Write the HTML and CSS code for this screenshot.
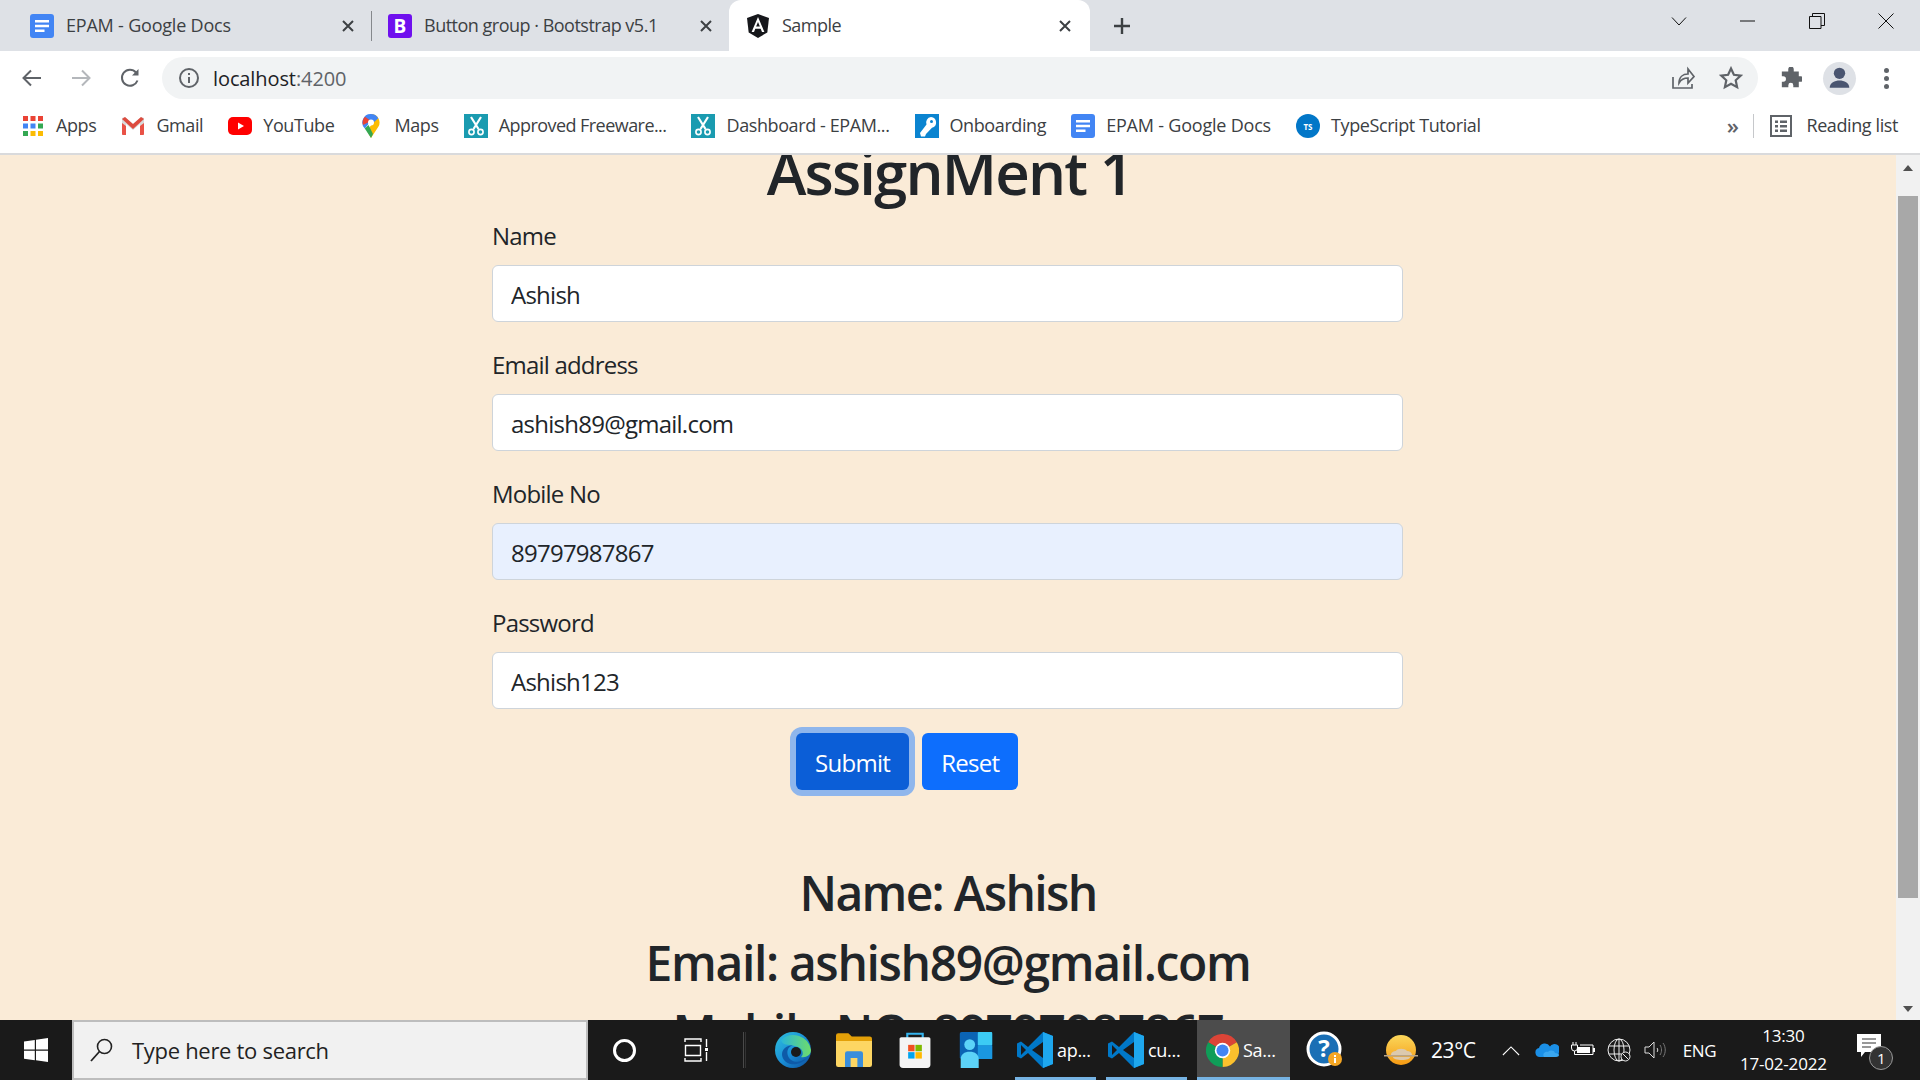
FILE: index.html
```html
<!DOCTYPE html>
<html lang="en">
<head>
<meta charset="utf-8">
<title>Sample</title>
<link rel="stylesheet" href="styles.css">
</head>
<body>
<svg class="defs" width="0" height="0">
  <defs>
    <symbol id="docs" viewBox="0 0 24 24"><rect x="0" y="0" width="24" height="24" rx="3" fill="#4285f4"/><path d="M5 6h14v2.6H5zM5 10.7h14v2.6H5zM5 15.4h9.5V18H5z" fill="#fff"/></symbol>
    <symbol id="ng" viewBox="0 0 24 24"><path d="M12 0 1 3.9l1.7 14.5L12 24l9.3-5.6L23 3.9z" fill="#16171b"/><path d="M12 3 5.6 18h2.4l1.3-3.3h5.4L16 18h2.4zm1.9 9.6h-3.8L12 8z" fill="#fff"/></symbol>
    <symbol id="teal" viewBox="0 0 24 24"><rect width="24" height="24" fill="#1a9bb0"/><path d="M7 3l7.5 12M17 3 9.5 15" stroke="#fff" stroke-width="2.2" fill="none"/><circle cx="7.5" cy="18" r="2.6" fill="none" stroke="#fff" stroke-width="1.6"/><circle cx="16.5" cy="18" r="2.6" fill="none" stroke="#fff" stroke-width="1.6"/></symbol>
    <symbol id="vsc" viewBox="0 0 36 36"><path d="M26 0 11 15 4 9.5 0 11.5v13l4 2 7-5.5L26 36l10-4V4z" fill="#0078c8"/><path d="M26 0 36 4v28l-10 4z" fill="#1ea7ee"/><path d="M26 10v16l-11-8z" fill="#1a1a1a"/><path d="M4 13v10l5-5z" fill="#1a1a1a"/></symbol>
  </defs>
</svg>
<div class="browser">
  <header class="tabstrip">
    <div class="tab">
      <svg class="ico24"><use href="#docs"/></svg>
      <span class="tab-title">EPAM - Google Docs</span>
      <svg class="tab-x" viewBox="0 0 12 12"><path d="M1 1l10 10M11 1 1 11"/></svg>
    </div>
    <div class="tab-sep"></div>
    <div class="tab tab-two">
      <svg class="ico24" viewBox="0 0 24 24"><rect width="24" height="24" rx="3" fill="#6f10ee"/><text x="12" y="18.5" text-anchor="middle" class="bs-b">B</text></svg>
      <span class="tab-title">Button group · Bootstrap v5.1</span>
      <svg class="tab-x" viewBox="0 0 12 12"><path d="M1 1l10 10M11 1 1 11"/></svg>
    </div>
    <div class="tab tab-active">
      <svg class="ico24"><use href="#ng"/></svg>
      <span class="tab-title">Sample</span>
      <svg class="tab-x" viewBox="0 0 12 12"><path d="M1 1l10 10M11 1 1 11"/></svg>
    </div>
    <svg class="tab-plus" viewBox="0 0 16 16"><path d="M8 0v16M0 8h16"/></svg>
    <div class="window-btns">
      <svg class="win-ico chev" viewBox="0 0 16 10"><path d="M1 1l7 7.5L15 1"/></svg>
      <svg class="win-ico min" viewBox="0 0 16 16"><path d="M0 8h15"/></svg>
      <svg class="win-ico rest" viewBox="0 0 16 16"><path d="M.5 3.5h11.500v12H.5zM3.500 3.500V.5h12v12H12"/></svg>
      <svg class="win-ico cls" viewBox="0 0 16 16"><path d="M.5.5l15 15M15.500.5l-15 15"/></svg>
    </div>
  </header>

  <div class="toolbar">
    <svg class="nav-ico" viewBox="0 0 24 24"><path d="M21 12H4M11 4.500 3.500 12l7.500 7.500" stroke="#5f6368"/></svg>
    <svg class="nav-ico" viewBox="0 0 24 24"><path d="M3 12h17M13 4.500 20.500 12 13 19.500" stroke="#b4b7bb"/></svg>
    <svg class="nav-ico" viewBox="0 0 24 24"><path d="M19.500 14.500A8 8 0 1 1 18 6.500" stroke="#5f6368"/><path d="M20.500 3v6.500H14z" fill="#5f6368"/></svg>
    <div class="omnibox">
      <svg class="info" viewBox="0 0 22 22"><circle cx="11" cy="11" r="9" fill="none" stroke="#5f6368" stroke-width="2"/><path d="M10 10h2v6h-2zM10 6h2v2h-2z" fill="#5f6368"/></svg>
      <span class="url">localhost<span class="url-port">:4200</span></span>
      <span class="omni-space"></span>
      <svg class="omni-ico" viewBox="0 0 24 24"><path d="M2 11v11h19v-4M8 17c0-6 4-9 9-9V3l6 7.500-6 6.500v-5c-4 0-7 1.500-9 5z" fill="none" stroke="#5f6368" stroke-width="1.700"/></svg>
      <svg class="omni-ico" viewBox="0 0 24 24"><path d="M12 2.500l2.900 6.300 6.900.8-5.100 4.700 1.400 6.800-6.100-3.400-6.100 3.400 1.400-6.800-5.100-4.700 6.900-.8z" fill="none" stroke="#5f6368" stroke-width="2.200"/></svg>
    </div>
    <svg class="ext" viewBox="0 0 24 24"><path d="M9 2.500a3 3 0 0 1 6 0V5h5.500v5h2a3 3 0 0 1 0 6h-2v6h-6v-2a2.700 2.700 0 0 0-5.400 0v2H2v-6h1.500a3 3 0 0 0 0-6H2V5h7z" fill="#5f6368"/></svg>
    <div class="avatar"><svg viewBox="0 0 32 32"><circle cx="16" cy="11" r="5.500" fill="#4a5570"/><path d="M6.500 25c0-5 5-7 9.500-7s9.500 2 9.500 7z" fill="#4a5570"/></svg></div>
    <div class="kebab"><i></i><i></i><i></i></div>
  </div>

  <nav class="bookmarks">
    <a class="bm bm-apps">
      <svg class="ico24" viewBox="0 0 24 24"><g id="dots"><rect x="2" y="2" width="5" height="5" fill="#ea4335"/><rect x="9.500" y="2" width="5" height="5" fill="#ea4335"/><rect x="17" y="2" width="5" height="5" fill="#ea4335"/><rect x="2" y="9.500" width="5" height="5" fill="#4285f4"/><rect x="9.500" y="9.500" width="5" height="5" fill="#4285f4"/><rect x="17" y="9.500" width="5" height="5" fill="#34a853"/><rect x="2" y="17" width="5" height="5" fill="#34a853"/><rect x="9.500" y="17" width="5" height="5" fill="#fbbc04"/><rect x="17" y="17" width="5" height="5" fill="#fbbc04"/></g></svg>
      <span>Apps</span></a>
    <a class="bm"><svg class="ico24" viewBox="0 0 24 24"><path d="M1 4v17h4V10l7 6 7-6v11h4V4l-3-1-8 7-8-7z" fill="#d9d9d9"/><path d="M1 4v5l4 3V21H2a1 1 0 0 1-1-1zM23 4v16a1 1 0 0 1-1 1h-3v-9l4-3z" fill="#ea4335" opacity=".9"/><path d="M1 5l3-2 8 7 8-7 3 2-11 10z" fill="#dd4b3e"/></svg><span>Gmail</span></a>
    <a class="bm"><svg class="ico24" viewBox="0 0 24 24"><rect y="3" width="24" height="18" rx="5" fill="#f00"/><path d="M10 8.500v7l6-3.500z" fill="#fff"/></svg><span>YouTube</span></a>
    <a class="bm"><svg class="ico24" viewBox="0 0 24 24"><path d="M12 0a8.500 8.500 0 0 1 7.500 12.600L12 24 8 17l7-10z" fill="#fbbc04"/><path d="M12 0A8.500 8.500 0 0 0 5.800 14.500L12 7z" fill="#4285f4"/><path d="M6 2.800A8.500 8.500 0 0 0 4 11l8-4z" fill="#ea4335"/><path d="M12 0a8.500 8.500 0 0 1 7.300 4.300L14 9l-2-2z" fill="#4285f4"/><path d="M5.800 14.500 12 24l2-4L9.500 11z" fill="#34a853"/><circle cx="12" cy="8.500" r="3" fill="#fff"/></svg><span>Maps</span></a>
    <a class="bm bm-tight"><svg class="ico24"><use href="#teal"/></svg><span>Approved Freeware...</span></a>
    <a class="bm"><svg class="ico24"><use href="#teal"/></svg><span>Dashboard - EPAM...</span></a>
    <a class="bm"><svg class="ico24" viewBox="0 0 24 24"><rect width="24" height="24" fill="#0b84d0"/><path d="M16 3a5.500 5.500 0 0 1 1 10.800L11 20l-1 2.500H6L5 19l6.500-8.500A5.500 5.500 0 0 1 16 3z" fill="#fff"/><circle cx="16.500" cy="7.500" r="1.500" fill="#0b84d0"/></svg><span>Onboarding</span></a>
    <a class="bm bm-loose"><svg class="ico24"><use href="#docs"/></svg><span>EPAM - Google Docs</span></a>
    <a class="bm"><svg class="ico24" viewBox="0 0 24 24"><circle cx="12" cy="12" r="12" fill="#0277c8"/><text x="12" y="15.500" text-anchor="middle" class="ts-t">TS</text></svg><span>TypeScript Tutorial</span></a>
    <span class="bm-space"></span>
    <span class="bm-more">»</span>
    <span class="bm-sep"></span>
    <a class="bm bm-read"><svg class="read-ico" viewBox="0 0 22 22"><rect x="1" y="1" width="20" height="20" fill="none" stroke="#5f6368" stroke-width="2"/><path d="M5 5.500h3v2.500H5zM10 5.500h7v2.500h-7zM5 10h3v2.500H5zM10 10h7v2.500h-7zM5 14.500h3V17H5zM10 14.500h7V17h-7z" fill="#5f6368"/></svg><span>Reading list</span></a>
  </nav>

  <div class="page">
    <main class="viewport">
      <h1 class="title">AssignMent 1</h1>
      <form class="form">
        <div class="field"><label class="lbl">Name</label><input class="input" value="Ashish"></div>
        <div class="field"><label class="lbl">Email address</label><input class="input" value="ashish89@gmail.com"></div>
        <div class="field"><label class="lbl">Mobile No</label><input class="input input-auto" value="89797987867"></div>
        <div class="field"><label class="lbl">Password</label><input class="input" value="Ashish123"></div>
        <div class="actions">
          <button type="button" class="btn btn-focus">Submit</button>
          <button type="button" class="btn">Reset</button>
        </div>
      </form>
      <section class="result">
        <h2 class="res res-name">Name: Ashish</h2>
        <h2 class="res">Email: ashish89@gmail.com</h2>
        <h2 class="res res-mobile">Mobile NO: 89797987867</h2>
      </section>
    </main>
    <aside class="scrollbar">
      <span class="arrow-up"></span>
      <span class="thumb"></span>
      <span class="arrow-down"></span>
    </aside>
  </div>

  <footer class="taskbar">
    <div class="start"><svg viewBox="0 0 24 24" class="ico24"><path d="M0 3.500 10.800 2v9.500H0zM12 1.800 24 0v11.500H12zM0 12.700h10.800v9.500L0 20.700zM12 12.700h12V24l-12-1.800z" fill="#fff"/></svg></div>
    <div class="search">
      <svg class="search-ico" viewBox="0 0 24 24"><circle cx="14.500" cy="8.500" r="7" fill="none" stroke="#222" stroke-width="1.600"/><path d="M9.500 13.500 1 23" stroke="#222" stroke-width="1.800"/></svg>
      <span>Type here to search</span>
    </div>
    <div class="tb-slot cortana"><i class="ring"></i></div>
    <div class="tb-slot taskview"><svg viewBox="0 0 24 24" class="ico24"><path d="M1 4V1h16v3M1 20v3h16v-3M1.500 7.500h15v10h-15zM22.500 1v8M22.500 14v9" fill="none" stroke="#fff" stroke-width="1.400"/><rect x="21" y="10" width="3" height="3" fill="#fff"/></svg></div>
    <div class="tb-div"></div>
    <div class="tb-app a-edge"><svg class="ico36" viewBox="0 0 36 36"><defs><linearGradient id="eg" x1="0" y1="0" x2="1" y2="1"><stop offset="0" stop-color="#2fc2dc"/><stop offset=".5" stop-color="#1a8fd8"/><stop offset="1" stop-color="#0c4d9c"/></linearGradient><linearGradient id="eg2" x1="0" y1="0" x2="1" y2="0"><stop offset="0" stop-color="#2ab6d8"/><stop offset="1" stop-color="#6fdc6a"/></linearGradient></defs><circle cx="18" cy="18" r="18" fill="url(#eg)"/><path d="M6 8A18 18 0 0 1 36 18c0 5-5 8-10 7 3-2 3-9-6-11C12 12 8 14 6 8z" fill="url(#eg2)"/><path d="M20 13c-6 0-9 5-7 11 2 5 8 7 13 5l6-3c-4 5-14 9-21 4-7-6-5-17 9-17z" fill="#0e5aa8"/><circle cx="21" cy="20" r="5" fill="#1a1a1a"/></svg></div>
    <div class="tb-app a-files"><svg class="ico36" viewBox="0 0 32 30"><path d="M0 2a2 2 0 0 1 2-2h9l3 3h16a2 2 0 0 1 2 2v5H0z" fill="#e3a008"/><path d="M0 7h32v21a2 2 0 0 1-2 2H2a2 2 0 0 1-2-2z" fill="#fdd663"/><path d="M8 30V18a2 2 0 0 1 2-2h12a2 2 0 0 1 2 2v12h-5v-8h-6v8z" fill="#3a8edb"/></svg></div>
    <div class="tb-app a-store"><svg class="ico36" viewBox="0 0 36 42"><path d="M9 7V2h18v5" fill="none" stroke="#35b4ee" stroke-width="2.500"/><path d="M0 8a2 2 0 0 1 2-2h32a2 2 0 0 1 2 2v30a4 4 0 0 1-4 4H4a4 4 0 0 1-4-4z" fill="#f4f4f4"/><rect x="10" y="15" width="7.500" height="7.500" fill="#f25022"/><rect x="18.500" y="15" width="7.500" height="7.500" fill="#7fba00"/><rect x="10" y="23.500" width="7.500" height="7.500" fill="#00a4ef"/><rect x="18.500" y="23.500" width="7.500" height="7.500" fill="#ffb900"/></svg></div>
    <div class="tb-app a-people"><svg class="ico36" viewBox="0 0 36 40"><rect x="0" y="0" width="36" height="30" rx="2" fill="#0b64b4"/><rect x="20" y="0" width="16" height="15" rx="1" fill="#3ccbf4"/><rect x="20" y="15" width="16" height="15" fill="#1a97e0"/><circle cx="11" cy="14" r="6" fill="#5cd3f8"/><path d="M1 40V30c0-5 4-8 10-8s10 3 10 8v10z" fill="#5cd3f8"/></svg></div>
    <div class="tb-app tb-run a-code"><svg class="ico36"><use href="#vsc"/></svg><span>ap...</span></div>
    <div class="tb-app tb-run a-code2"><svg class="ico36"><use href="#vsc"/></svg><span>cu...</span></div>
    <div class="tb-app tb-run tb-on a-chrome"><svg class="ico33" viewBox="0 0 24 24"><path d="M12 12 1.600 6A12 12 0 0 1 22.400 6z" fill="#db4437"/><path d="M12 12 22.400 6A12 12 0 0 1 12 24z" fill="#fbc02d"/><path d="M12 12V24A12 12 0 0 1 1.600 6z" fill="#0f9d58"/><circle cx="12" cy="12" r="5.600" fill="#fff"/><circle cx="12" cy="12" r="4.400" fill="#4285f4"/></svg><span>Sa...</span></div>
    <div class="tb-help"><svg viewBox="0 0 38 38" class="ico38"><circle cx="18" cy="18" r="16" fill="#1a6fb5" stroke="#fff" stroke-width="3"/><text x="18" y="26" text-anchor="middle" class="help-q">?</text><circle cx="29" cy="28" r="7" fill="#f5a623"/><path d="M28 27h2v5h-2zM28 24h2v2h-2z" fill="#fff"/></svg></div>
    <div class="tb-weather"><svg viewBox="0 0 36 32" class="w-ico"><defs><linearGradient id="sun" x1="0" y1="0" x2="0" y2="1"><stop offset="0" stop-color="#fbd75b"/><stop offset="1" stop-color="#f59a13"/></linearGradient></defs><circle cx="18" cy="16" r="15" fill="url(#sun)"/><path d="M1 21h34v1.500H1z" fill="#b9a58a"/><path d="M8 21c0-3 3-4 5-4 1-3 9-3 11 0 3 0 5 2 5 4zM10 23h17c0 2-3 3-8 3s-9-1-9-3z" fill="#dcc9ae"/></svg><span>23°C</span></div>
    <div class="tray">
      <svg class="tray-caret" viewBox="0 0 20 12"><path d="M1 11l9-9 9 9"/></svg>
      <svg class="tray-cloud" viewBox="0 0 24 14"><path d="M5 14a4.500 4.500 0 0 1-1-8.900A6 6 0 0 1 15 3.500 5 5 0 0 1 24 9c0 3-2 5-4 5z" fill="#1b8fe6"/><path d="M9 14c-2-3 1-6 4-5 2-2 6-2 7 1 2 0 4 1 4 2s-1 2-4 2z" fill="#3aa7f0"/></svg>
      <svg class="tray-bat" viewBox="0 0 24 16"><path d="M2 0v3M5 0v3M.5 3h6v3a3 3 0 0 1-6 0zM3.500 9v3.500H22V3H9" fill="none" stroke="#fff" stroke-width="1"/><rect x="6" y="5" width="13" height="6" fill="#fff"/><rect x="22" y="6" width="2" height="4" fill="#fff"/></svg>
      <svg class="tray-globe" viewBox="0 0 24 24"><g fill="none" stroke="#eee" stroke-width="1"><circle cx="12" cy="12" r="11"/><ellipse cx="12" cy="12" rx="5" ry="11"/><path d="M2 8h20M2 16h20M12 1v22"/></g><circle cx="18.500" cy="18.500" r="4.500" fill="#1a1a1a" stroke="#eee"/><path d="M15.500 15.500l6 6" stroke="#eee"/></svg>
      <svg class="tray-vol" viewBox="0 0 22 18"><path d="M1 6h4l5-5v16l-5-5H1z" fill="none" stroke="#ddd"/><path d="M13 7c1 1 1 3 0 4" fill="none" stroke="#ddd"/><path d="M16 4c2 3 2 7 0 10M19 2c3 4 3 10 0 14" fill="none" stroke="#777"/></svg>
      <span class="tray-lang">ENG</span>
      <div class="clock"><span>13:30</span><span>17-02-2022</span></div>
      <div class="notify">
        <svg viewBox="0 0 24 24" class="notify-ico"><path d="M0 0h24v18H8l-4 5v-5H0z" fill="#fff"/><path d="M5 5h14M5 9h14M5 13h9" stroke="#333" stroke-width="1.200"/></svg>
        <span class="badge">1</span>
      </div>
    </div>
  </footer>
</div>
</body>
</html>
```

FILE: styles.css
```css
* { box-sizing: border-box; }
html, body { margin: 0; height: 100%; overflow: hidden; }
body { font-family: "Open Sans", "Noto Sans", sans-serif; color: #212529; }
.defs { position: absolute; }
.browser { display: flex; flex-direction: column; width: 1920px; height: 1080px; overflow: hidden; }
.ico24 { width: 24px; height: 24px; flex: none; }
.ico36 { width: 36px; height: 36px; flex: none; }
.ico33 { width: 33px; height: 33px; flex: none; }
.ico38 { width: 38px; height: 38px; flex: none; }

/* tab strip */
.tabstrip { height: 51px; flex: none; background: #dee1e6; display: flex; align-items: center; font-size: 18px; letter-spacing: -.2px; color: #3c4043; }
.tab { height: 51px; width: 372px; flex: none; display: flex; align-items: center; padding-left: 30px; }
.tab-two { width: 357px; padding-left: 16px; letter-spacing: -.5px; }
.tab-active { width: 361px; padding-left: 17px; background: #fff; border-radius: 12px 12px 0 0; color: #3c4043; letter-spacing: -.5px; }
.tab-title { margin-left: 12px; flex: 1; white-space: nowrap; padding-bottom: 1px; }
.tab-x { width: 12px; height: 12px; flex: none; margin-right: 18px; fill: none; stroke: #3c4043; stroke-width: 2; }
.tab-two .tab-x { margin-right: 17px; }
.tab-active .tab-x { margin-right: 19px; }
.tab-sep { width: 1px; height: 30px; background: #85888c; flex: none; margin-left: -1px; }
.bs-b { font: 700 19px "Open Sans", sans-serif; fill: #fff; letter-spacing: 0; }
.tab-plus { width: 16px; height: 16px; margin-left: 24px; fill: none; stroke: #3c4043; stroke-width: 2.4; flex: none; }
.window-btns { margin-left: auto; display: flex; align-items: center; height: 51px; padding-right: 26px; gap: 53px; padding-bottom: 9px; }
.win-ico { width: 16px; height: 16px; fill: none; stroke: #111; stroke-width: 1; flex: none; }
.win-ico.chev { height: 11px; }

/* toolbar */
.toolbar { height: 51px; flex: none; background: #fff; display: flex; align-items: center; padding: 6px 0 3px 20px; }
.nav-ico { width: 24px; height: 24px; flex: none; margin-right: 25px; fill: none; stroke-width: 2; }
.nav-ico:nth-of-type(3) { margin-right: 20px; }
.omnibox { width: 1596px; height: 42px; background: #f1f3f4; border-radius: 21px; display: flex; align-items: center; padding-left: 16px; flex: none; }
.info { width: 22px; height: 22px; flex: none; }
.url { margin-left: 13px; font-size: 20px; letter-spacing: -.1px; color: #202124; }
.url-port { color: #5f6368; }
.omni-space { flex: 1; }
.omni-ico { width: 24px; height: 24px; margin-right: 24px; flex: none; }
.omni-ico:last-child { margin-right: 15px; }
.ext { width: 22px; height: 22px; margin-left: 22px; flex: none; }
.avatar { width: 33px; height: 33px; border-radius: 50%; background: #dee1e6; margin-left: 21px; flex: none; }
.avatar svg { width: 33px; height: 33px; display: block; }
.kebab { display: flex; flex-direction: column; gap: 3px; margin-left: 28px; }
.kebab i { width: 5px; height: 5px; border-radius: 50%; background: #5f6368; display: block; }

/* bookmarks */
.bookmarks { height: 51px; flex: none; background: #fff; display: flex; align-items: center; padding: 0 22px 3px 21px; gap: 25px; font-size: 18px; letter-spacing: -.4px; color: #3c4043; white-space: nowrap; }
.bm { display: flex; align-items: center; gap: 11px; }
.bm > span { margin-top: -2px; }
.bm-loose { letter-spacing: -.2px; }
.bm-tight { letter-spacing: -.55px; }
.bm-space { flex: 1; }
.bm-more { font-size: 22px; color: #5f6368; margin-right: -10px; line-height: 1; font-weight: 600; margin-top: -2px; }
.bm-sep { width: 1px; height: 24px; background: #c6c8cb; margin-right: -9px; }
.bm-read { gap: 14px; }
.read-ico { width: 22px; height: 22px; flex: none; }
.ts-t { font: 700 8px "Open Sans", sans-serif; fill: #fff; letter-spacing: 0; }

/* page */
.page { flex: 1; min-height: 0; display: flex; border-top: 2px solid #d9dadc; background: #faebd7; }
.viewport { flex: 1; min-width: 0; overflow: hidden; }
.title { font-size: 60px; font-weight: 600; line-height: 72px; text-align: center; margin: -19px 0 9px; padding-left: 3px; letter-spacing: -1.85px; }
.form { width: 911px; margin-left: 492px; }
.field { margin-bottom: 24px; }
.lbl { display: block; font-size: 24px; line-height: 36px; padding-top: 1px; height: 36px; margin-bottom: 12px; letter-spacing: -.8px; }
.input { display: block; width: 100%; height: 57px; padding: 2px 18px 0; font: inherit; font-size: 24px; letter-spacing: -.75px; color: #212529; background: #fff; border: 1.500px solid #ced4da; border-radius: 6px; outline: none; }
.input-auto { background: #e8f0fe; }
.actions { display: flex; gap: 13px; padding-left: 304px; }
.btn { height: 57px; padding: 2px 19px 0; font: inherit; font-size: 24px; letter-spacing: -.7px; color: #fff; background: #0d6efd; border: 0; border-radius: 6px; }
.btn-focus { background: #0b5ed7; box-shadow: 0 0 0 6px #8fb6ec; }
.result { margin-top: 74px; text-align: center; }
.res { font-size: 48px; font-weight: 600; line-height: 57.600px; margin: 0 0 12px; letter-spacing: -1.36px; }
.res-name { letter-spacing: -1.7px; }
.res-mobile { letter-spacing: -1px; }

/* scrollbar */
.scrollbar { width: 24px; flex: none; background: #f1f1f1; display: flex; flex-direction: column; align-items: center; padding: 10px 0 8px; }
.arrow-up { width: 0; height: 0; border: 5.500px solid transparent; border-top: 0; border-bottom: 6px solid #505050; }
.thumb { width: 20px; height: 702px; background: #a8a8a8; margin-top: 25px; }
.arrow-down { width: 0; height: 0; border: 5.500px solid transparent; border-bottom: 0; border-top: 6px solid #505050; margin-top: auto; }

/* taskbar */
.taskbar { height: 60px; flex: none; background: #1a1a1a; display: flex; align-items: center; position: relative; color: #fff; }
.start { width: 72px; height: 60px; display: flex; align-items: center; justify-content: center; flex: none; }
.search { width: 516px; height: 60px; flex: none; background: #f1f1f1; border: 2px solid #bdbdbd; display: flex; align-items: center; padding-left: 16px; color: #222; font-size: 22px; letter-spacing: -.3px; }
.search-ico { width: 24px; height: 24px; margin-right: 18px; flex: none; }
.tb-slot { height: 60px; display: flex; align-items: center; justify-content: center; flex: none; }
.cortana { width: 72px; }
.ring { width: 23px; height: 23px; border: 3px solid #fff; border-radius: 50%; display: block; }
.taskview { width: 72px; }
.tb-div { width: 3px; height: 36px; border-left: 1px solid #4a4a4a; border-right: 1px solid #333; flex: none; margin-left: 11px; }
.tb-app { height: 60px; display: flex; align-items: center; justify-content: center; flex: none; font-size: 18px; letter-spacing: -.3px; position: relative; }
.a-edge { width: 36px; margin-left: 29px; }
.a-files { width: 36px; margin-left: 25px; }
.a-store { width: 36px; margin-left: 25px; }
.a-people { width: 36px; margin-left: 25px; }
.tb-run { justify-content: flex-start; gap: 4px; padding-left: 2px; border-bottom: 3px solid #76b3e3; padding-top: 3px; }
.a-code { width: 81px; margin-left: 21px; }
.a-code2 { width: 81px; margin-left: 10px; }
.a-chrome { width: 93px; margin-left: 10px; padding-left: 9px; }
.tb-on { background: #4c4c4c; }
.tb-help { width: 38px; margin-left: 16px; flex: none; display: flex; }
.help-q { font: 700 24px "Open Sans", sans-serif; fill: #fff; }
.tb-weather { display: flex; align-items: center; margin-left: 39px; font-size: 21px; letter-spacing: -.4px; gap: 12px; flex: none; }
.w-ico { width: 36px; height: 32px; flex: none; }
.tray { display: flex; align-items: center; margin-left: 26px; flex: none; }
.tray-caret { width: 18px; height: 11px; fill: none; stroke: #fff; stroke-width: 1.200; flex: none; }
.tray-cloud { width: 24px; height: 14px; margin-left: 15px; flex: none; }
.tray-bat { width: 24px; height: 16px; margin-left: 12px; flex: none; }
.tray-globe { width: 24px; height: 24px; margin-left: 12px; flex: none; }
.tray-vol { width: 22px; height: 18px; margin-left: 13px; flex: none; }
.tray-lang { font-size: 17px; letter-spacing: -.3px; margin-left: 17px; }
.clock { width: 94px; margin-left: 20px; display: flex; flex-direction: column; align-items: center; font-size: 17px; letter-spacing: -.2px; line-height: 28px; }
.notify { position: relative; width: 32px; height: 32px; margin-left: 27px; }
.notify-ico { width: 24px; height: 24px; position: absolute; left: 0; top: 0; }
.badge { position: absolute; right: -4px; bottom: -4px; width: 24px; height: 24px; border-radius: 50%; background: #333; border: 1px solid #999; font-size: 15px; line-height: 22px; text-align: center; }
```
